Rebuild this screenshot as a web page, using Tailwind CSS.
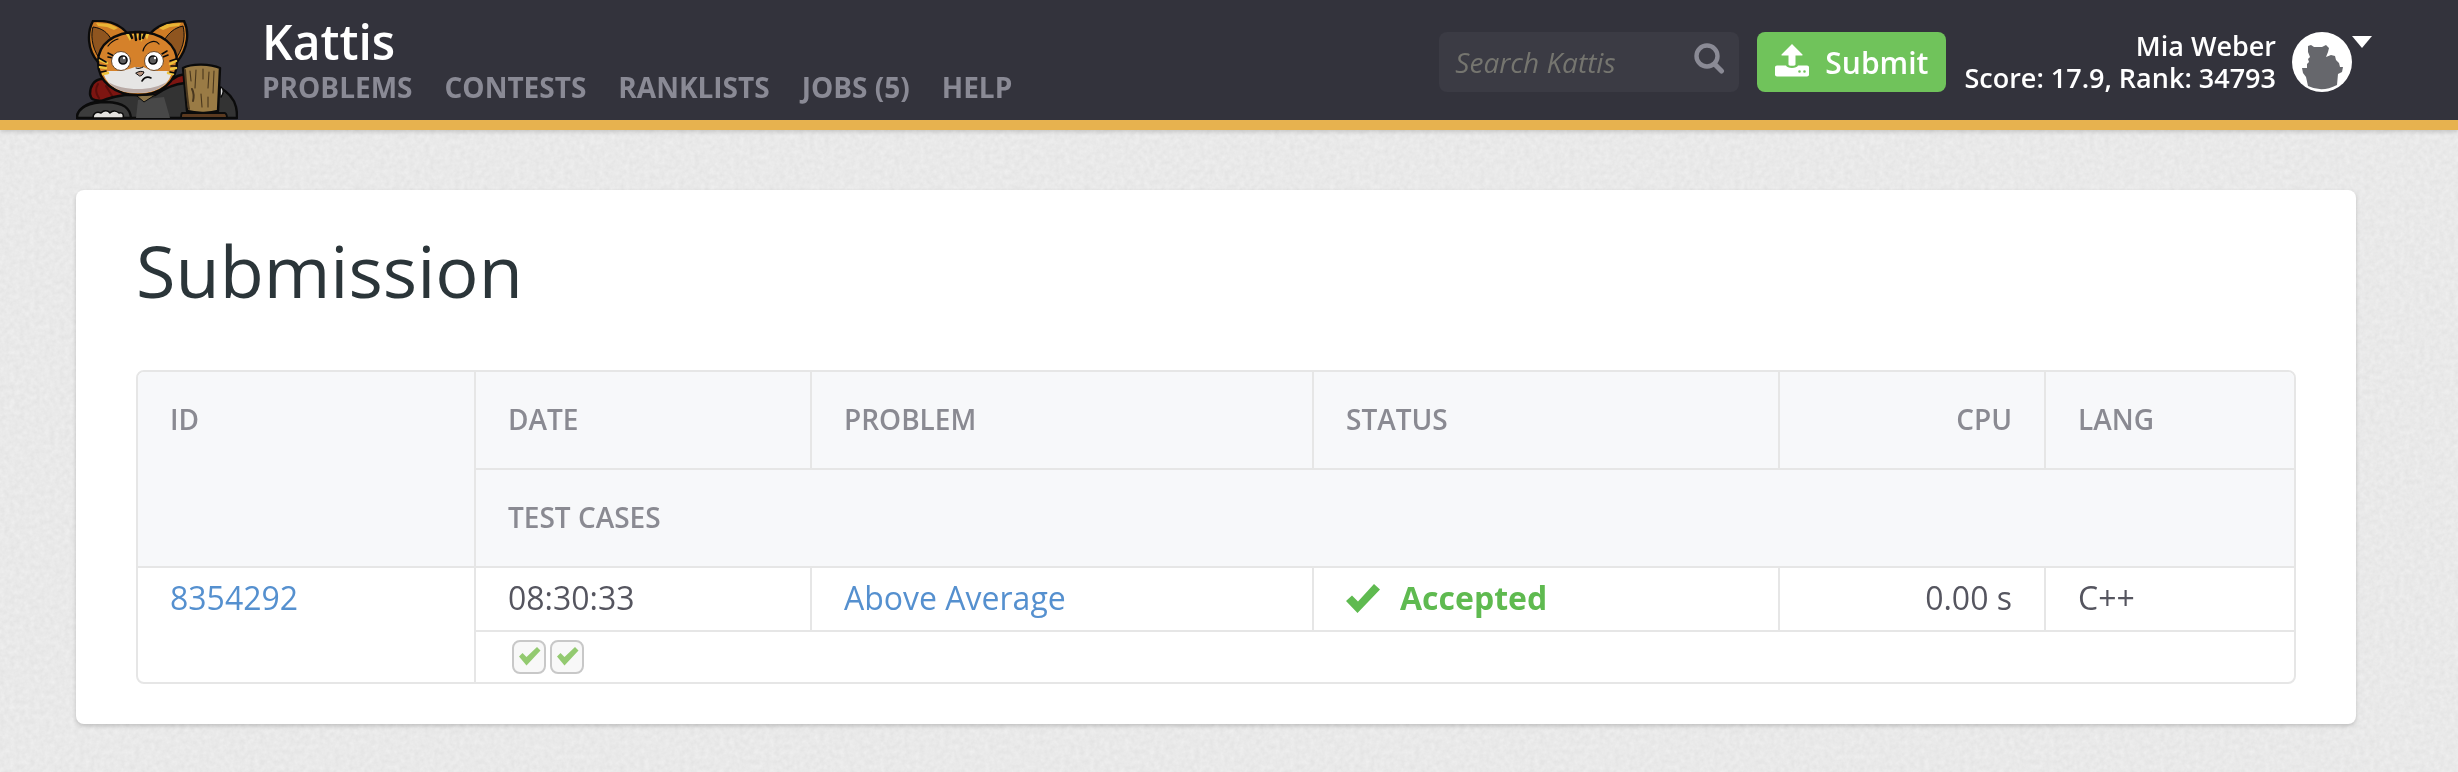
<!DOCTYPE html>
<html lang="en">
<head>
<meta charset="utf-8">
<title>Submission – Kattis</title>
<script src="https://cdn.jsdelivr.net/npm/@tailwindcss/browser@4"></script>
</head>
<body class="min-h-screen bg-[#e9e9e9] font-['Open_Sans',sans-serif] text-[32px] text-[#55555f]">
<svg class="fixed inset-0 -z-10 h-full w-full" aria-hidden="true">
  <filter id="paper" x="0" y="0" width="100%" height="100%" color-interpolation-filters="sRGB">
    <feTurbulence type="fractalNoise" baseFrequency="0.2" numOctaves="3" seed="4"/>
    <feColorMatrix values="0.06 0 0 0 0.884  0.06 0 0 0 0.884  0.06 0 0 0 0.884  0 0 0 0 1"/>
  </filter>
  <rect width="100%" height="100%" filter="url(#paper)"/>
</svg>

<header class="flex h-[130px] justify-between border-b-10 border-[#e7b24f] bg-[#33333c] pr-[86px] pl-[76px] shadow-[0_2px_4px_rgba(0,0,0,0.15)]">
  <div class="flex gap-6">
    <a href="#" aria-label="Kattis home" class="flex items-end">
      <svg class="h-[100px] w-[162px]" viewBox="76 20 162 100" stroke="#0b0b0b" stroke-width="2.4" stroke-linejoin="round" stroke-linecap="round">
        <path d="M103 101c-8-1-12 0-13-7 0-8 4-14 11-15h72c6-5 13-6 16-1v12l-20 12z" fill="#7d1511"/>
        <path d="M98 84c-3 5-2 10 1 14M106 86l8 13" fill="none" stroke="#5a0d0b" stroke-width="2"/>
        <path d="M77 118c0-9 9-15 24-17 10-4 15-5 24-6h30c10-7 18-11 30-12 28-4 47 8 51 24 1 4 1 7 1 11z" fill="#333"/>
        <path d="M138 100l26-3 6 21h-34z" fill="#484848" stroke="none"/>
        <path d="M137 96l7 6 11-7z" fill="#8a7347" stroke-width="1"/>
        <path d="M77 118c0-10 12-16 30-16 17 1 23 6 24 16z" fill="#3c3c3c"/>
        <path d="M93 118c0-5 4-7 8-5 3-3 7-3 9 0 3-3 7-2 9 0 4-1 5 2 4 5z" fill="#e4e2df" stroke-width="1.5"/>
        <path d="M98 62C87 50 87 32 93 21c14-1 27 3 35 13z" fill="#cf7c25"/>
        <path d="M99 58C91 46 91 34 93 27c9 1 15 6 18 12z" fill="#8f551f" stroke-width="1"/>
        <path d="M177 62c12-15 12-31 7-41-14 0-27 4-35 14z" fill="#cf7c25"/>
        <path d="M177 57c8-12 8-23 6-31-9 2-14 7-18 13z" fill="#8f551f" stroke-width="1"/>
        <path d="M96 23l14 1 8 4-4 2-7-3-9-1zM181 23l-14 1-8 4 4 2 7-3 9-1z" fill="#e9b536" stroke="none"/>
        <path d="M98 62c0-18 16-30 40-30s39 13 39 30c0 20-16 33-39 33S98 82 98 62z" fill="#d5812a"/>
        <path d="M104 75c0-3 3-4 7-4h9c8-1 11-3 15-4h8c4 1 5 3 12 4h10c4 0 7 1 6 4-4 12-17 18-33 18s-30-6-34-18z" fill="#e6e5e4" stroke="none"/>
        <path d="M108 82c15 9 45 10 60-1-7 8-16 12-30 12s-23-3-30-11z" fill="#b9aaa6" stroke="none"/>
        <path d="M126 34l4 7 3-7 3 8 3-8 2 8 4-7 2 5 2-6z" fill="#ecc33c" stroke="none"/>
        <path d="M130 33l2 5M135 32l1 8M140 32v7M145 33l-2 5" fill="none" stroke-width="2.4"/>
        <path d="M100 60l7 3M100 67l6 1M103 74l5-1M176 61l-6 3M176 68l-5 1M173 74l-5-1" fill="none" stroke="#ecc33c" stroke-width="2.5"/>
        <path d="M99 58l7 4M99 65l7 1M101 72l5-1M176 59l-6 2M177 66l-6 0M175 73l-5-1M108 53l6 3M108 57l5 1M162 54l5-3M163 57l5-2" fill="none" stroke-width="1.6"/>
        <circle cx="121" cy="61" r="9.500" fill="#fff" stroke="#6b4a2c" stroke-width="1"/>
        <circle cx="154" cy="61" r="9.500" fill="#fff" stroke="#6b4a2c" stroke-width="1"/>
        <circle cx="123" cy="60" r="4" fill="#5c5c5c" stroke-width="1.6"/>
        <circle cx="153" cy="60" r="4" fill="#5c5c5c" stroke-width="1.6"/>
        <circle cx="124" cy="58" r="1.2" fill="#fff" stroke="none"/>
        <circle cx="155" cy="58" r="1.2" fill="#fff" stroke="none"/>
        <path d="M143 51c2-9 12-12 16-7M108 46c3-4 6-6 10-7" fill="none" stroke-width="1.2"/>
        <path d="M136 68c3 1 5 0 7-1M136 73c3-2 6-2 8-1-1 3-3 4-4 4z" fill="#b99480" stroke-width="1"/>
        <path d="M142 81c2-3 5-5 9-3" fill="none" stroke-width="1.6"/>
        <path d="M221 87c3 2 3 6 0 10" fill="#ddd" stroke-width="1.5"/>
        <path d="M182 113h43c2 1 2 3 2 5h-46c0-2 0-4 1-5z" fill="#5b3a20" stroke-width="1.8"/>
        <path d="M183 68c9-5 28-4 37 0l-2 43c-9 3-23 2-31 0z" fill="#9a7b45"/>
        <path d="M190 71l1 10M196 70l-1 18M203 69v10M209 72l-1 16M214 71l-1 22M201 94l1 13M208 97v10" fill="none" stroke="#4a371d" stroke-width="1.1"/>
        <path d="M185 70c1 14 2 28 4 39M192 89c2 4 2 8 1 12" fill="none" stroke="#49371f" stroke-width="2"/>
      </svg>
    </a>
    <div>
      <a href="#" class="block pt-[15px] text-[48px] leading-[54px] font-semibold text-white">Kattis</a>
      <nav class="flex gap-8 text-[28px] leading-9 font-bold text-[#8a8a95]">
        <a href="#">PROBLEMS</a><a href="#">CONTESTS</a><a href="#">RANKLISTS</a><a href="#">JOBS (5)</a><a href="#">HELP</a>
      </nav>
    </div>
  </div>

  <div class="mt-8 flex h-[60px] items-center gap-[18px] self-start">
    <form class="flex h-[60px] w-[300px] items-center rounded-lg bg-[#3b3b44] pr-[14px] pl-4">
      <input type="search" aria-label="Search Kattis" placeholder="Search Kattis" class="h-full min-w-0 flex-1 bg-transparent text-[28px] italic outline-none placeholder:text-[#75756f]">
      <button type="button" aria-label="Search" class="-mt-2">
        <svg class="h-8 w-8" viewBox="0 0 32 32" fill="none" stroke="#8a8a95"><circle cx="14" cy="14" r="10.500" stroke-width="4.400"/><path d="M21.500 22l7 7" stroke-width="5" stroke-linecap="round"/></svg>
      </button>
    </form>
    <button type="button" class="flex h-[60px] items-center gap-4 rounded-lg bg-[#70c35b] px-[18px] text-[30px] font-semibold text-white">
      <svg class="-mt-1 h-[33px] w-[34px]" viewBox="0 0 34 33" fill="#fff"><path d="M17 0L27.500 10.500Q28 11.500 27 11.500H20.500V20.500Q20.500 21.800 17 21.800T13.500 20.500V11.500H7Q6 11.500 6.500 10.500z"/><path fill-rule="evenodd" d="M2 21.500h9c.8 3.200 11.200 3.200 12 0H32c1.200 0 2 .8 2 2v7c0 1.200-.8 2-2 2H2c-1.200 0-2-.8-2-2v-7c0-1.200.8-2 2-2zM24.500 26.200a1.300 1.300 0 100 2.600 1.300 1.300 0 000-2.600zM29.500 26.200a1.300 1.300 0 100 2.600 1.300 1.300 0 000-2.600z"/></svg>
      Submit
    </button>
    <a href="#" class="flex items-center gap-4 text-right text-[27px] leading-8 font-semibold text-white">
      <span>Mia Weber<br>Score: 17.9, Rank: 34793</span>
      <span class="flex">
        <svg class="h-[60px] w-[60px]" viewBox="0 0 60 60"><circle cx="30" cy="30" r="30" fill="#fff"/><path d="M16 14L19 13L22 15H30L34 13L37 16L36 20L34 25L39 23L43 24L44 28L47 31L48 35L51 35L50 40L46 42L45 53Q30 61 16 54L14 45L11 41L10 36L15 36V32L17 30L16 27L18 25L16 20z" fill="#66676c"/></svg>
        <svg class="mt-1 h-3 w-5" viewBox="0 0 20 12"><path d="M0 0h20L10 12z" fill="#fff"/></svg>
      </span>
    </a>
  </div>
</header>

<main class="mt-[60px] mr-[102px] ml-[76px] rounded-lg bg-white px-[60px] pt-[30px] pb-10 shadow-[0_2px_4px_rgba(0,0,0,0.18)]">
  <h1 class="mb-[50px] text-[72px] leading-[100px] text-[#2b3539]">Submission</h1>
  <table class="w-full table-fixed border-separate border-spacing-0 overflow-hidden rounded-lg border-2 border-[#e6e6e6] text-left [&_td]:border-[#e6e6e6] [&_td]:px-8 [&_th]:border-[#e6e6e6] [&_th]:px-8">
    <colgroup><col class="w-[338px]"><col class="w-[336px]"><col class="w-[502px]"><col class="w-[466px]"><col class="w-[266px]"><col></colgroup>
    <thead class="bg-[#f7f8fa] text-[28px] text-[#8a8a92] [&_th]:h-[98px] [&_th]:border-b-2 [&_th]:pb-0.5 [&_th]:font-semibold">
      <tr>
        <th rowspan="2" class="border-r-2 pt-[26px] align-top">ID</th>
        <th class="border-r-2">DATE</th>
        <th class="border-r-2">PROBLEM</th>
        <th class="border-r-2">STATUS</th>
        <th class="border-r-2 text-right">CPU</th>
        <th>LANG</th>
      </tr>
      <tr><th colspan="5">TEST CASES</th></tr>
    </thead>
    <tbody>
      <tr class="h-16 [&_td]:pb-0.5">
        <td rowspan="2" class="border-r-2 pt-[6px] align-top"><a href="#" class="text-[#5590cf]">8354292</a></td>
        <td class="border-r-2 border-b-2">08:30:33</td>
        <td class="border-r-2 border-b-2"><a href="#" class="text-[#5590cf]">Above Average</a></td>
        <td class="border-r-2 border-b-2 font-bold text-[#5fba50]">
          <span class="flex items-center gap-5">
            <svg class="h-[29px] w-[34px]" viewBox="0 0 34 29"><path d="M0 17L6 11.500L12 17.500L28 0L34 5.500L11.500 29z" fill="currentColor"/></svg>
            Accepted
          </span>
        </td>
        <td class="border-r-2 border-b-2 text-right">0.00 s</td>
        <td class="border-b-2">C++</td>
      </tr>
      <tr class="h-[50px]">
        <td colspan="5">
          <div class="flex gap-1 pl-1">
            <span role="img" aria-label="Test case 1: accepted" class="flex h-[34px] w-[34px] items-center justify-center rounded-lg border-2 border-[#c8c8c8] bg-[#f8f8f8]"><svg class="h-5 w-6" viewBox="0 0 24 20"><path d="M2 9.500l3.500-3.500 4 4L20 0l3.500 3.500L9.500 18.500z" fill="#93ca70"/></svg></span>
            <span role="img" aria-label="Test case 2: accepted" class="flex h-[34px] w-[34px] items-center justify-center rounded-lg border-2 border-[#c8c8c8] bg-[#f8f8f8]"><svg class="h-5 w-6" viewBox="0 0 24 20"><path d="M2 9.500l3.500-3.500 4 4L20 0l3.500 3.500L9.500 18.500z" fill="#93ca70"/></svg></span>
          </div>
        </td>
      </tr>
    </tbody>
  </table>
</main>
</body>
</html>
